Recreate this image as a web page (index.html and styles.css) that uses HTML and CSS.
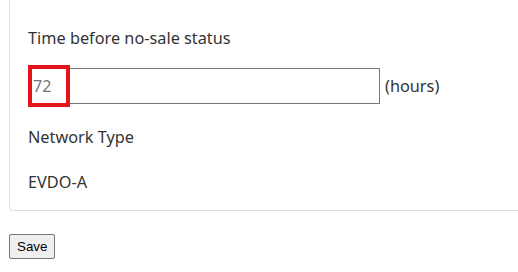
FILE: index.html
```html
<!DOCTYPE html>
<html lang="en">
<head>
    <meta charset="UTF-8">
    <meta name="viewport" content="width=device-width, initial-scale=1.0">
    <title>Settings</title>
    <link rel="stylesheet" href="styles.css">
</head>
<body>
    <div class="page">
        <div class="panel">
            <div class="field-label">Time before no-sale status</div>
            <div class="input-row">
                <input type="text" class="text-input" value="72">
                <span class="unit">(hours)</span>
                <div class="highlight"></div>
            </div>
            <div class="field-label spaced">Network Type</div>
            <div class="field-value">EVDO-A</div>
        </div>
        <button class="save-button">Save</button>
    </div>
</body>
</html>
```

FILE: styles.css
```css
/* Page de base */
body {
    margin: 0;
    font-family: "Noto Sans", "Open Sans", sans-serif;
    font-size: 16.3px;
    color: #333333;
    background: #ffffff;
}

.page {
    padding: 0 0 0 9px;
}

/* Panneau, le haut et la droite sont hors écran */
.panel {
    border: 1px solid #dddddd;
    border-top: none;
    border-right: none;
    border-radius: 0 0 0 4px;
    padding: 26px 0 16px 18px;
}

.field-label,
.field-value {
    line-height: 24px;
}

.spaced {
    margin-top: 21px;
}

.field-value {
    margin-top: 21px;
}

.input-row {
    position: relative;
    display: flex;
    align-items: center;
    margin-top: 18px;
}

.text-input {
    box-sizing: border-box;
    width: 352px;
    height: 36px;
    border: 1px solid #767676;
    border-radius: 0;
    padding: 0 4px;
    font-family: inherit;
    font-size: 16px;
    color: #757575;
    margin: 0;
}

.unit {
    margin-left: 5px;
}

/* Cadre rouge d'annotation */
.highlight {
    position: absolute;
    left: 0;
    top: -3px;
    width: 42px;
    height: 42px;
    box-sizing: border-box;
    border: 4px solid #e5141b;
}

.save-button {
    margin-top: 23px;
    font-family: Arial, "Liberation Sans", sans-serif;
    font-size: 13.33px;
    padding: 4px 7px;
    background: #efefef;
    border: 1px solid #767676;
    border-radius: 2px;
    color: #000000;
}
```
